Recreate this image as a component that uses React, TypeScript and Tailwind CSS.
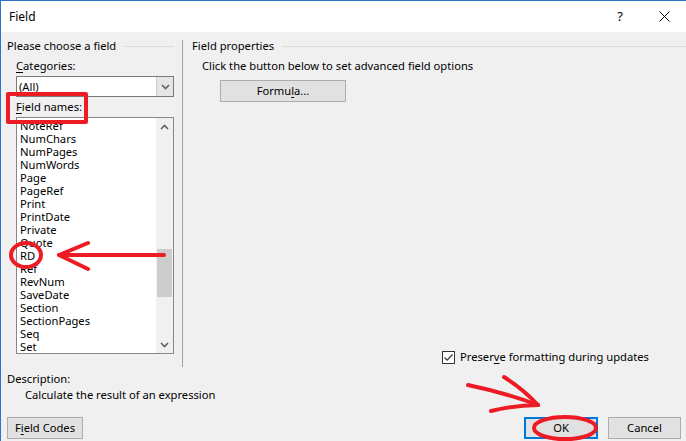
import React from 'react';

const font = { fontFamily: '"Noto Sans", "Open Sans", sans-serif' };

const fieldNames = [
  'NoteRef', 'NumChars', 'NumPages', 'NumWords', 'Page', 'PageRef', 'Print', 'PrintDate',
  'Private', 'Quote', 'RD', 'Ref', 'RevNum', 'SaveDate', 'Section', 'SectionPages', 'Seq', 'Set',
];

const Chevron = ({ up }: { up?: boolean }) => (
  <svg width="9" height="6" viewBox="0 0 9 6" className="block">
    <path d={up ? 'M1 5 L4.5 1.5 L8 5' : 'M1 1 L4.5 4.5 L8 1'} fill="none" stroke="#606060" strokeWidth="1.6" />
  </svg>
);

const GroupHeader = ({ label }: { label: string }) => (
  <div className="flex items-center h-4 gap-2">
    <span className="whitespace-nowrap">{label}</span>
    <div className="flex-1 h-px bg-[#dcdcdc]" />
  </div>
);

const Btn = ({ children, className = '' }: { children: React.ReactNode; className?: string }) => (
  <div className={`h-[22px] flex items-center justify-center bg-[#e1e1e1] border border-[#adadad] ${className}`}>
    {children}
  </div>
);

// red marker scribbles over the dialog
const Annotations = () => (
  <svg className="absolute inset-0 pointer-events-none" width="686" height="441" viewBox="0 0 686 441">
    <g fill="none" stroke="#ed1c24" strokeWidth="4" strokeLinecap="round" strokeLinejoin="round">
      <rect x="7" y="93" width="78" height="28" strokeLinecap="butt" />
      <ellipse cx="25" cy="254" rx="15" ry="12" />
      <path d="M58 254 L163 254" />
      <path d="M87 242 L58 254 L87 268" />
      <ellipse cx="564" cy="427" rx="31" ry="11" />
      <path d="M467 384 Q505 392 537 404" />
      <path d="M503 376 Q522 388 537 404" />
      <path d="M490 410 Q515 404 537 404" />
    </g>
  </svg>
);

export default function App() {
  return (
    <div
      className="relative w-[686px] h-[441px] overflow-hidden bg-[#f0f0f0] border-l border-t border-[#2b74c9] text-[11.2px] text-black flex flex-col"
      style={font}
    >
      {/* title bar */}
      <div className="h-[31px] bg-white flex items-center pl-[8px] shrink-0 text-[12px]">
        <span className="flex-1">Field</span>
        <span className="w-[30px] text-center text-[13px] mr-[24px]">?</span>
        <svg width="11" height="11" viewBox="0 0 11 11" className="mr-[16px]">
          <path d="M0.5 0.5 L10.5 10.5 M10.5 0.5 L0.5 10.5" stroke="#000" strokeWidth="1" />
        </svg>
      </div>

      <div className="flex h-[336px] shrink-0 pt-[6px]">
        {/* left: field list */}
        <div className="w-[181px] pl-[6px] pr-[8px] flex flex-col">
          <GroupHeader label="Please choose a field" />
          <div className="pl-[9px] mt-[4px] h-4 leading-4">
            <u className="underline-offset-2">C</u>ategories:
          </div>
          <div className="ml-[9px] mt-[2px] h-[21px] border border-[#7a7a7a] bg-white flex">
            <span className="flex-1 pl-[2px] leading-[19px]">(All)</span>
            <div className="w-[17px] bg-[#e5e5e5] border-l border-[#c8c8c8] flex items-center justify-center">
              <Chevron />
            </div>
          </div>
          <div className="pl-[9px] mt-[2px] h-4 leading-4">
            <u className="underline-offset-2">F</u>ield names:
          </div>
          <div className="ml-[9px] mt-[2px] h-[237px] border border-[#828790] bg-white flex overflow-hidden">
            <div className="flex-1 pl-[3px] pt-[1px] overflow-hidden">
              {fieldNames.map((n) => (
                <div key={n} className="h-[13px] leading-[13px] whitespace-nowrap">{n}</div>
              ))}
            </div>
            <div className="w-[17px] bg-[#f0f0f0] flex flex-col items-center">
              <div className="h-[17px] flex items-center justify-center"><Chevron up /></div>
              <div className="mt-[114px] w-[15px] h-[48px] bg-[#cdcdcd]" />
              <div className="flex-1" />
              <div className="h-[17px] flex items-center justify-center"><Chevron /></div>
            </div>
          </div>
        </div>

        <div className="w-px bg-[#a0a0a0] mt-[2px] h-[327px]" />

        {/* right: properties */}
        <div className="flex-1 pl-[9px] flex flex-col">
          <GroupHeader label="Field properties" />
          <div className="pl-[10px] mt-[4px] h-4 leading-4">Click the button below to set advanced field options</div>
          <Btn className="ml-[28px] mt-[6px] w-[126px]">
            Formu<u className="underline-offset-2">l</u>a...
          </Btn>
          <div className="flex-1" />
          <div className="flex items-center ml-[250px] mb-[2px] gap-[5px]">
            <div className="w-[13px] h-[13px] border border-[#333] bg-white flex items-center justify-center">
              <svg width="11" height="11" viewBox="0 0 11 11">
                <path d="M1.5 5.5 L4.2 8.2 L9.5 2.5" fill="none" stroke="#333" strokeWidth="1.2" />
              </svg>
            </div>
            <span>
              Preser<u className="underline-offset-2">v</u>e formatting during updates
            </span>
          </div>
        </div>
      </div>

      {/* description */}
      <div className="pl-[6px] mt-[3px] h-4 leading-4">Description:</div>
      <div className="pl-[24px] h-4 leading-4">Calculate the result of an expression</div>

      {/* bottom buttons */}
      <div className="flex items-center mt-[14px] pl-[6px] pr-[5px]">
        <Btn className="w-[76px]">
          F<u className="underline-offset-2">i</u>eld Codes
        </Btn>
        <div className="flex-1" />
        <div className="w-[74px] h-[22px] flex items-center justify-center bg-[#e1e1e1] border-2 border-[#0078d7]">OK</div>
        <Btn className="w-[73px] ml-[10px]">Cancel</Btn>
      </div>

      <Annotations />
    </div>
  );
}
